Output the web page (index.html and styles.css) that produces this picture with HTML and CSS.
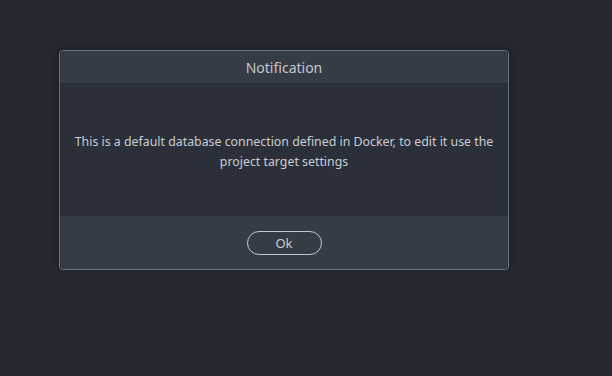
FILE: index.html
```html
<!DOCTYPE html>
<html lang="en">
<head>
    <meta charset="UTF-8">
    <meta name="viewport" content="width=device-width, initial-scale=1.0">
    <title>Notification</title>
    <link rel="stylesheet" href="styles.css">
</head>
<body>
    <!-- 弹窗 -->
    <div class="dialog">
        <div class="dialog-head">Notification</div>
        <div class="dialog-body">
            <p>This is a default database connection defined in Docker, to edit it use the project target settings</p>
        </div>
        <div class="dialog-foot">
            <a href="javascript:;" class="btn">Ok</a>
        </div>
    </div>
</body>
</html>
```

FILE: styles.css
```css
*{
    margin: 0;
    padding: 0;
    box-sizing: border-box;
}
body{
    background-color: #252831;
    font-family: "Noto Sans", "Open Sans", sans-serif;
    color: #c9ccd1;
    padding: 50px 0 0 59px;
}
.dialog{
    width: 450px;
    height: 220px;
    border: 1px solid #69737d;
    border-radius: 4px;
    overflow: hidden;
    display: flex;
    flex-direction: column;
    background-color: #2b2f39;
    box-shadow: 0 0 8px rgba(0,0,0,0.35);
}
.dialog-head{
    height: 32px;
    background-color: #363c46;
    text-align: center;
    font-size: 14px;
    line-height: 34px;
    color: #c4c8ce;
}
.dialog-body{
    flex: 1;
    display: flex;
    align-items: center;
    justify-content: center;
    padding: 4px 12px 0;
    text-align: center;
    font-size: 12.35px;
    line-height: 20px;
}
.dialog-foot{
    height: 53px;
    background-color: #363c46;
    display: flex;
    align-items: center;
    justify-content: center;
}
.btn{
    width: 75px;
    height: 24px;
    border: 1px solid #c4c8ce;
    border-radius: 12px;
    color: #c9ccd1;
    font-size: 13px;
    line-height: 22px;
    text-align: center;
    text-decoration: none;
}
```
